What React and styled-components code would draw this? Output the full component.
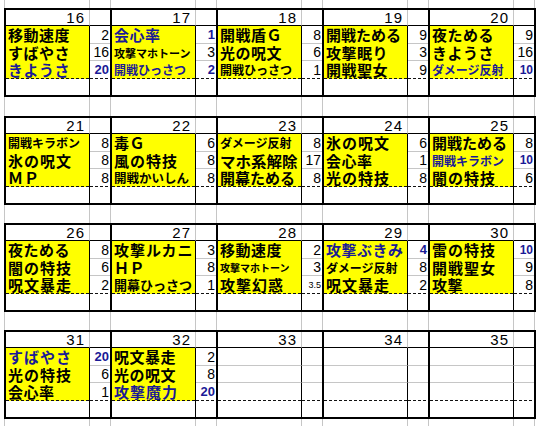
import React from "react";
import styled, { createGlobalStyle, css } from "styled-components";

const GRID = "#c6c6c6";
const YELLOW = "#ffff00";
const NAVY = "#1a1a96";

const GlobalStyle = createGlobalStyle`
  html, body { margin: 0; padding: 0; background: #fff; }
  body { width: 540px; height: 426px; overflow: hidden; }
`;

const Sheet = styled.div`
  width: 540px;
  height: 426px;
  box-sizing: border-box;
  padding: 8px 0 0 4px;
  display: flex;
  flex-direction: column;
  background-color: #fff;
  background-image: repeating-linear-gradient(
    to right,
    ${GRID} 0 1px,
    transparent 1px 85px,
    ${GRID} 85px 86px,
    transparent 86px 106px
  );
  background-position: 4px 0;
`;

const BlockRow = styled.div`
  display: flex;
  margin-bottom: ${(p) => p.$gap}px;
`;

const Block = styled.div`
  display: grid;
  grid-template-columns: 84px 20px;
  grid-template-rows: 16px 18px 17px 18px 16px;
  border: 2px solid #000;
  border-right: none;
  background: #fff;
  &:last-child {
    border-right: 2px solid #000;
  }
`;

const dashed = css`
  background-image: repeating-linear-gradient(to right, #111 0 3px, transparent 3px 5px);
  background-size: 100% 1px;
  background-position: left bottom;
  background-repeat: no-repeat;
`;

const HeaderLabel = styled.div`
  box-sizing: border-box;
  border-bottom: 1px solid #000;
  border-right: 1px solid ${GRID};
  display: flex;
  align-items: center;
  justify-content: flex-end;
  padding-right: 4px;
  font-family: "Liberation Sans", Arial, sans-serif;
  font-size: 15px;
  line-height: 15px;
  letter-spacing: 1px;
  color: #000;
`;

const HeaderNum = styled.div`
  box-sizing: border-box;
  border-bottom: 1px solid #000;
`;

const Label = styled.div`
  box-sizing: border-box;
  min-width: 0;
  border-right: 1px solid #000;
  background-color: ${(p) => (p.$filled ? YELLOW : "#fff")};
  ${(p) => !p.$filled && !p.$last && !p.$empty && css`border-bottom: 1px solid ${GRID};`}
  ${(p) => p.$last && dashed}
  display: flex;
  align-items: center;
  padding-left: 2px;
  white-space: nowrap;
  font-family: "Noto Sans CJK JP", sans-serif;
  font-weight: 700;
  font-size: ${(p) => p.$size}px;
  letter-spacing: ${(p) => p.$ls}px;
  color: ${(p) => (p.$blue ? NAVY : "#000")};
  line-height: 16px;
`;

const Num = styled.div`
  box-sizing: border-box;
  min-width: 0;
  ${(p) => !p.$last && !p.$empty && css`border-bottom: 1px solid ${GRID};`}
  ${(p) => p.$last && dashed}
  display: flex;
  align-items: center;
  justify-content: flex-end;
  padding-right: 1px;
  white-space: nowrap;
  font-family: "Liberation Sans", Arial, sans-serif;
  font-size: ${(p) => p.$size}px;
  font-weight: ${(p) => (p.$blue ? 700 : 400)};
  color: ${(p) => (p.$blue ? NAVY : "#000")};
  line-height: 16px;
`;

const it = (t, n, o = {}) => ({ t, n, ...o });

const rows = [
  [
    [16, [it("移動速度", "2"), it("すばやさ", "16"), it("きようさ", "20", { b: 1 })]],
    [17, [it("会心率", "1", { b: 1 }), it("攻撃マホトーン", "3", { s: 11, ls: 0 }), it("開戦ひっさつ", "2", { b: 1, s: 12, ls: 0 })]],
    [18, [it("開戦盾Ｇ", "8"), it("光の呪文", "6"), it("開戦ひっさつ", "1", { s: 12, ls: 0 })]],
    [19, [it("開戦ためる", "9", { ls: 0 }), it("攻撃眠り", "3"), it("開戦聖女", "9")]],
    [20, [it("夜ためる", "9"), it("きようさ", "16"), it("ダメージ反射", "10", { b: 1, s: 12, ls: 0, ns: 12 })]],
  ],
  [
    [21, [it("開戦キラボン", "8", { s: 12, ls: 0 }), it("氷の呪文", "8", { ls: 1 }), it("ＭＰ", "8", { ls: 1 })]],
    [22, [it("毒Ｇ", "6"), it("風の特技", "8", { ls: 1 }), it("開戦かいしん", "8", { s: 12.5, ls: 0 })]],
    [23, [it("ダメージ反射", "8", { s: 12, ls: 0 }), it("マホ系解除", "17", { s: 15.5, ls: 0 }), it("開幕ためる", "8", { ls: 0 })]],
    [24, [it("氷の呪文", "6", { ls: 1 }), it("会心率", "1"), it("光の特技", "8", { ls: 1 })]],
    [25, [it("開戦ためる", "8", { ls: 0 }), it("開戦キラボン", "10", { b: 1, s: 12, ls: 0, ns: 12 }), it("闇の特技", "6", { ls: 1 })]],
  ],
  [
    [26, [it("夜ためる", "8"), it("闇の特技", "6", { ls: 1 }), it("呪文暴走", "2", { ls: 1 })]],
    [27, [it("攻撃ルカニ", "3", { ls: 1 }), it("ＨＰ", "8"), it("開幕ひっさつ", "1", { s: 13, ls: 0 })]],
    [28, [it("移動速度", "2"), it("攻撃マホトーン", "3", { s: 10, ls: 0 }), it("攻撃幻惑", "3.5", { ls: 1, ns: 9 })]],
    [29, [it("攻撃ぶきみ", "4", { b: 1, ls: 0.5 }), it("ダメージ反射", "8", { s: 12, ls: 0 }), it("呪文暴走", "2", { ls: 1 })]],
    [30, [it("雷の特技", "10", { ls: 1, nb: 1, ns: 12 }), it("開戦聖女", "9", { ls: 1 }), it("攻撃", "8")]],
  ],
  [
    [31, [it("すばやさ", "20", { b: 1, ls: 1 }), it("光の特技", "6", { ls: 1 }), it("会心率", "1")]],
    [32, [it("呪文暴走", "2", { ls: 0.5 }), it("光の呪文", "8", { ls: 0.5 }), it("攻撃魔力", "20", { b: 1, ls: 1 })]],
    [33, null],
    [34, null],
    [35, null],
  ],
];

const gaps = [19, 18, 18, 0];

function DayBlock({ day, items }) {
  const data = items || [null, null, null];
  return (
    <Block>
      <HeaderLabel>{day}</HeaderLabel>
      <HeaderNum />
      {data.map((d, i) => {
        const last = i === 2;
        const blueNum = d && (d.b || d.nb);
        return (
          <React.Fragment key={i}>
            <Label
              $filled={!!d}
              $last={last}
              $blue={d && d.b}
              $size={(d && d.s) || 15}
              $ls={d && d.ls !== undefined ? d.ls : 0.5}
            >
              {d ? d.t : ""}
            </Label>
            <Num $last={last} $blue={blueNum} $size={(d && d.ns) || (blueNum ? 13 : 14)}>
              {d ? d.n : ""}
            </Num>
          </React.Fragment>
        );
      })}
      <Label $empty $size={15} $ls={0} />
      <Num $empty $size={14} />
    </Block>
  );
}

export default function App() {
  return (
    <>
      <GlobalStyle />
      <Sheet>
        {rows.map((row, ri) => (
          <BlockRow key={ri} $gap={gaps[ri]}>
            {row.map(([day, items]) => (
              <DayBlock key={day} day={day} items={items} />
            ))}
          </BlockRow>
        ))}
      </Sheet>
    </>
  );
}
